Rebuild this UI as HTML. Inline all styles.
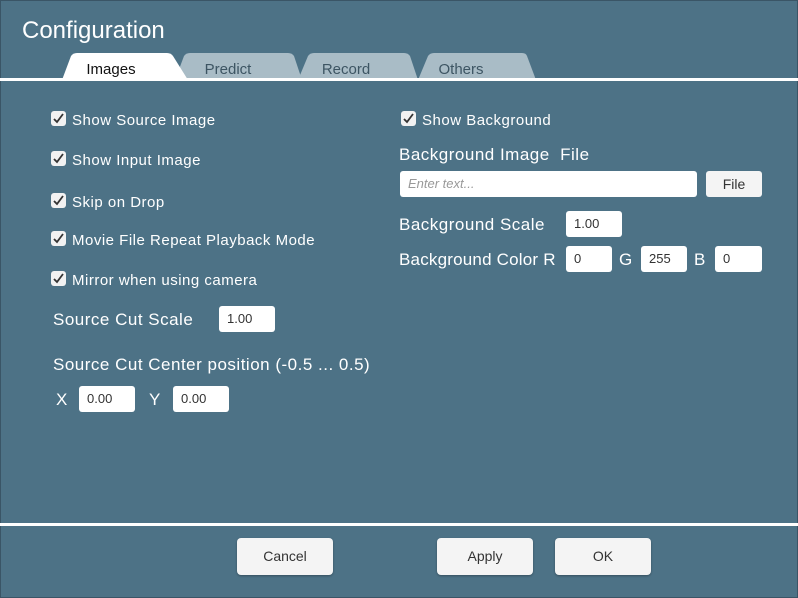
<!DOCTYPE html>
<html><head><style>
body{margin:0;width:798px;height:598px;background:#4d7286;font-family:"Liberation Sans",sans-serif;color:#fff;position:relative;overflow:hidden}
.a{position:absolute;white-space:nowrap}
.cb{position:absolute;width:15px;height:15px;background:#f2f2f2;border-radius:3px}
.cb svg{position:absolute;left:1px;top:1px}
.lbl{font-size:15px;letter-spacing:0.5px;margin-top:2px}
.big{font-size:17px;letter-spacing:0.5px}
.in{position:absolute;background:#fff;border-radius:3px;color:#333;font-size:13px;box-sizing:border-box;padding-left:8px;line-height:26px;height:26px}
.btn{position:absolute;background:#f4f4f4;border-radius:4px;color:#333;font-size:14px;text-align:center;box-shadow:0 1px 2px rgba(0,0,0,.3)}
</style></head><body>
<div style="position:absolute;left:0;top:0;width:796px;height:596px;border:1px solid #3a5566"></div>
<div class="a" style="left:22px;top:17px;font-size:24px">Configuration</div>
<svg class="a" style="left:0;top:50px" width="798" height="34">
<path d="M418 30 L428 6 Q430 3 434 3 L522 3 Q526 3 527 6 L536 30Z" fill="#a9bcc6"/>
<path d="M298 30 L308 6 Q310 3 314 3 L404 3 Q408 3 410 6 L418 30Z" fill="#a9bcc6"/>
<path d="M175 30 L184 6 Q186 3 190 3 L288 3 Q292 3 294 6 L302 30Z" fill="#a9bcc6"/>
<path d="M62 30 L71 6 Q73 3 77 3 L167 3 Q171 3 173 6 L188 30Z" fill="#fff"/>
<rect x="0" y="28" width="798" height="3" fill="#fff"/>
<text x="111" y="24" fill="#111" font-family="Liberation Sans" font-size="15" text-anchor="middle">Images</text>
<text x="228" y="24" fill="#3d5563" font-family="Liberation Sans" font-size="15" text-anchor="middle">Predict</text>
<text x="346" y="24" fill="#3d5563" font-family="Liberation Sans" font-size="15" text-anchor="middle">Record</text>
<text x="461" y="24" fill="#3d5563" font-family="Liberation Sans" font-size="15" text-anchor="middle">Others</text>
</svg>

<div class="cb" style="left:51px;top:111px"><svg width="13" height="13"><path d="M2 7 L5 10 L11 2" stroke="#333" stroke-width="1.8" fill="none"/></svg></div>
<div class="a lbl" style="left:72px;top:110px">Show Source Image</div>
<div class="cb" style="left:51px;top:151px"><svg width="13" height="13"><path d="M2 7 L5 10 L11 2" stroke="#333" stroke-width="1.8" fill="none"/></svg></div>
<div class="a lbl" style="left:72px;top:150px">Show Input Image</div>
<div class="cb" style="left:51px;top:193px"><svg width="13" height="13"><path d="M2 7 L5 10 L11 2" stroke="#333" stroke-width="1.8" fill="none"/></svg></div>
<div class="a lbl" style="left:72px;top:192px">Skip on Drop</div>
<div class="cb" style="left:51px;top:231px"><svg width="13" height="13"><path d="M2 7 L5 10 L11 2" stroke="#333" stroke-width="1.8" fill="none"/></svg></div>
<div class="a lbl" style="left:72px;top:230px">Movie File Repeat Playback Mode</div>
<div class="cb" style="left:51px;top:271px"><svg width="13" height="13"><path d="M2 7 L5 10 L11 2" stroke="#333" stroke-width="1.8" fill="none"/></svg></div>
<div class="a lbl" style="left:72px;top:270px">Mirror when using camera</div>
<div class="a big" style="left:53px;top:310px">Source Cut Scale</div>
<div class="in" style="left:219px;top:306px;width:56px">1.00</div>
<div class="a big" style="left:53px;top:355px">Source Cut Center position (-0.5 ... 0.5)</div>
<div class="a big" style="left:56px;top:390px">X</div>
<div class="in" style="left:79px;top:386px;width:56px">0.00</div>
<div class="a big" style="left:149px;top:390px">Y</div>
<div class="in" style="left:173px;top:386px;width:56px">0.00</div>

<div class="cb" style="left:401px;top:111px"><svg width="13" height="13"><path d="M2 7 L5 10 L11 2" stroke="#333" stroke-width="1.8" fill="none"/></svg></div>
<div class="a lbl" style="left:422px;top:110px">Show Background</div>
<div class="a big" style="left:399px;top:145px">Background Image &nbsp;File</div>
<div class="in" style="left:400px;top:171px;width:297px;color:#999;font-style:italic">Enter text...</div>
<div class="btn" style="left:706px;top:171px;width:56px;height:26px;line-height:26px;border-radius:3px;box-shadow:none">File</div>
<div class="a big" style="left:399px;top:215px">Background Scale</div>
<div class="in" style="left:566px;top:211px;width:56px">1.00</div>
<div class="a big" style="left:399px;top:250px;letter-spacing:0.2px">Background Color R</div>
<div class="in" style="left:566px;top:246px;width:46px">0</div>
<div class="a big" style="left:619px;top:250px">G</div>
<div class="in" style="left:641px;top:246px;width:46px">255</div>
<div class="a big" style="left:694px;top:250px">B</div>
<div class="in" style="left:715px;top:246px;width:47px">0</div>

<div class="a" style="left:0;top:523px;width:798px;height:3px;background:#fff"></div>
<div class="btn" style="left:237px;top:538px;width:96px;height:37px;line-height:37px">Cancel</div>
<div class="btn" style="left:437px;top:538px;width:96px;height:37px;line-height:37px">Apply</div>
<div class="btn" style="left:555px;top:538px;width:96px;height:37px;line-height:37px">OK</div>
</body></html>
